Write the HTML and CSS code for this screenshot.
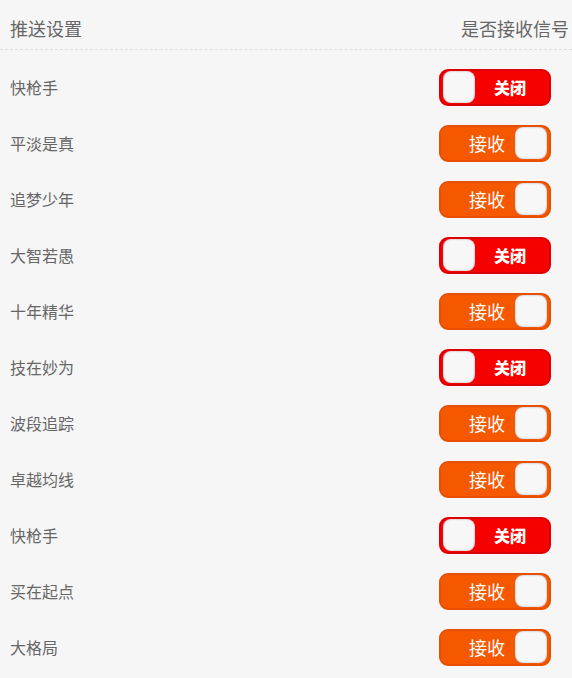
FILE: index.html
```html
<!DOCTYPE html>
<html lang="zh-CN">
  <head>
    <meta charset="UTF-8" />
    <meta name="viewport" content="width=device-width, initial-scale=1.0" />
    <title>推送设置</title>
    <link rel="stylesheet" href="styles.css">
  </head>
  <body>
    <div class="header">
      <span>推送设置</span>
      <span>是否接收信号</span>
    </div>
    <ul class="list">
      <li class="row"><span class="name">快枪手</span><div class="switch off"><i class="knob"></i><b>关闭</b></div></li>
      <li class="row"><span class="name">平淡是真</span><div class="switch on"><b>接收</b><i class="knob"></i></div></li>
      <li class="row"><span class="name">追梦少年</span><div class="switch on"><b>接收</b><i class="knob"></i></div></li>
      <li class="row"><span class="name">大智若愚</span><div class="switch off"><i class="knob"></i><b>关闭</b></div></li>
      <li class="row"><span class="name">十年精华</span><div class="switch on"><b>接收</b><i class="knob"></i></div></li>
      <li class="row"><span class="name">技在妙为</span><div class="switch off"><i class="knob"></i><b>关闭</b></div></li>
      <li class="row"><span class="name">波段追踪</span><div class="switch on"><b>接收</b><i class="knob"></i></div></li>
      <li class="row"><span class="name">卓越均线</span><div class="switch on"><b>接收</b><i class="knob"></i></div></li>
      <li class="row"><span class="name">快枪手</span><div class="switch off"><i class="knob"></i><b>关闭</b></div></li>
      <li class="row"><span class="name">买在起点</span><div class="switch on"><b>接收</b><i class="knob"></i></div></li>
      <li class="row"><span class="name">大格局</span><div class="switch on"><b>接收</b><i class="knob"></i></div></li>
    </ul>
  </body>
</html>
```

FILE: styles.css
```css
body {
  margin: 0;
  background: #f6f6f6;
  font-family: "Noto Sans CJK SC", "Noto Sans", sans-serif;
  color: #666;
}
.header {
  height: 43px;
  padding: 6px 3px 0 10px;
  display: flex;
  justify-content: space-between;
  align-items: center;
  font-size: 18px;
  color: #666;
  border-bottom: 1px dashed #dedede;
}
.list {
  list-style: none;
  margin: 0;
  padding: 9px 0 0;
}
.row {
  height: 56px;
  padding: 0 21px 0 10px;
  display: flex;
  justify-content: space-between;
  align-items: center;
}
.name {
  font-size: 16px;
  color: #666;
}
.switch {
  box-sizing: border-box;
  width: 112px;
  height: 37px;
  padding: 0 2px;
  border-radius: 9px;
  display: flex;
  align-items: center;
  color: #fff;
}
.switch b {
  flex: 1;
  text-align: center;
}
.switch.off {
  background: #f60000;
  border: 2px solid #dc0000;
}
.switch.off b {
  font-size: 16px;
  font-weight: 900;
  padding-right: 2px;
}
.switch.on {
  background: #f65800;
  border: 2px solid #e85000;
}
.switch.on b {
  font-size: 18px;
  font-weight: 400;
  padding-left: 16px;
}
.knob {
  width: 32px;
  height: 32px;
  border-radius: 8px;
  background: #f7f7f7;
  box-shadow: inset 0 0 2px rgba(0, 0, 0, 0.35);
}
```
